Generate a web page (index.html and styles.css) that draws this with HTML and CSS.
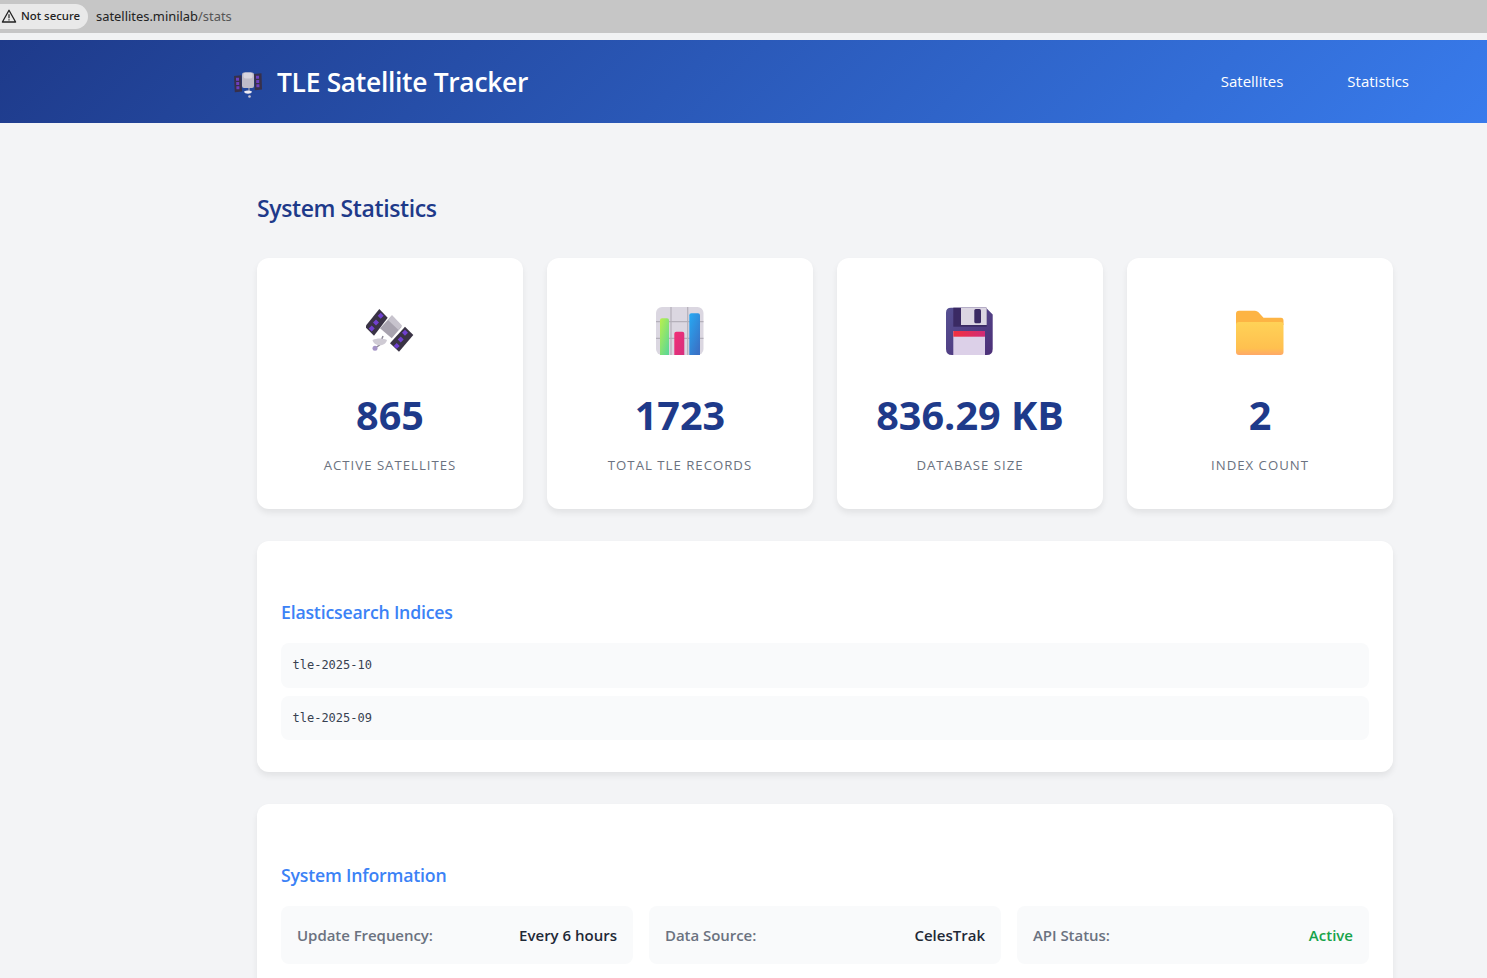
FILE: index.html
```html
<!DOCTYPE html>
<html lang="en">
<head>
<meta charset="utf-8">
<title>System Statistics</title>
<link rel="stylesheet" href="styles.css">
</head>
<body>
<div class="chrome">
  <div class="security">
    <svg class="warn" viewBox="0 0 16 16" width="16" height="16"><path d="M8 2.200 14.600 14H1.400Z" fill="none" stroke="#222" stroke-width="1.300" stroke-linejoin="round"/><path d="M8 6.300v4M8 11.300v1.200" stroke="#222" stroke-width="1.200"/></svg>
    <span>Not secure</span>
  </div>
  <div class="url">satellites.minilab<span class="url-path">/stats</span></div>
</div>
<div class="chrome-gap"></div>
<div class="page">
  <header class="site-header">
    <div class="header-inner">
      <div class="brand">
        <svg class="brand-icon" viewBox="0 0 32 32" width="32" height="32">
          <path d="M1 10 8.500 9.300 9 25.500 1.800 26.200z" fill="#37304a"/>
          <path d="M21 8 28.500 7.300 29 23.500 21.800 24.200z" fill="#37304a"/>
          <path d="M3 11.700h3v3H3zM3.200 16h3v3h-3zM3.400 20.300h3v3h-3zM23 9.700h3v3h-3zM23.200 14h3v3h-3zM23.400 18.300h3v3h-3z" fill="#6d3fc0"/>
          <rect x="9" y="6.500" width="12" height="15.500" rx="2" fill="#bfbbc8"/>
          <rect x="10.500" y="6.500" width="9" height="6" rx="2" fill="#d8d4de"/>
          <path d="M16 22v3" stroke="#a9a5b2" stroke-width="1.200"/>
          <path d="M11 25.500c2.500-1.300 5.500-1.300 8 0-.5 3-7.500 3-8 0z" fill="#eeeaf2"/>
          <circle cx="16.500" cy="30.500" r="1.300" fill="#c9c4d2"/>
        </svg>
        <span class="brand-title">TLE Satellite Tracker</span>
      </div>
      <nav class="nav">
        <a class="nav-link">Satellites</a>
        <a class="nav-link">Statistics</a>
      </nav>
    </div>
  </header>
  <main class="content">
    <h1 class="page-title">System Statistics</h1>
    <section class="stats">
      <article class="stat-card">
        <svg class="stat-icon" viewBox="1 0 48 48" width="48" height="48">
          <path d="M14.300 2 22.700 10.700 9 28.700 0 19.700z" fill="#3a3345"/>
          <path d="M40 19.700 48.300 28 34 44.700 25 36.300z" fill="#3a3345"/>
          <path d="M15.700 5.800 18.700 8.800 15.700 11.700 12.700 8.800zM11 12.500l3 3-3 2.900-3-2.900zM6.700 18.600l3 3-3 2.900-3-2.900zM40 22.800l3 3-3 2.900-3-2.900zM35.700 29.500l3 3-3 2.900-3-2.900zM31.700 35.900l3 3-3 2.900-3-2.900z" fill="#7040d0"/>
          <path d="M26.700 8.700 36.700 19.700 26.700 31.300 15 21.300z" fill="#a8a3af"/>
          <path d="M27 8 37 18.500 33.500 23 23 13z" fill="#c7c3cd"/>
          <path d="M18 29 14.500 38 11 40.500" fill="none" stroke="#8f8a98" stroke-width="1.500"/>
          <path d="M7.500 33c4.500-2 10-2 14.500 0-1.500 7-13 7-14.500 0z" fill="#cfcbd4"/>
          <circle cx="10" cy="41.300" r="2.500" fill="#a594c6"/>
        </svg>
        <div class="stat-value">865</div>
        <div class="stat-label">Active Satellites</div>
      </article>
      <article class="stat-card">
        <svg class="stat-icon" viewBox="0 0 48 48" width="48" height="48">
          <defs>
            <linearGradient id="g1" x1="0" y1="0" x2="0.800" y2="1"><stop offset="0" stop-color="#baf04c"/><stop offset="1" stop-color="#5fd893"/></linearGradient>
            <linearGradient id="g2" x1="0" y1="0" x2="1" y2="1"><stop offset="0" stop-color="#f12e76"/><stop offset="1" stop-color="#d6307e"/></linearGradient>
            <linearGradient id="g3" x1="0" y1="0" x2="0.700" y2="1"><stop offset="0" stop-color="#26aaf4"/><stop offset="1" stop-color="#3a72c6"/></linearGradient>
          </defs>
          <rect x="0" y="0" width="47.500" height="48" rx="6" fill="#dbd7e1"/>
          <path d="M15 0v48M31.700 0v48M0 14.700h47.500M0 31.300h47.500" stroke="#b4b0ba" stroke-width="1.200"/>
          <path d="M4 48V13.300q0-2 2-2h5q2 0 2 2V48z" fill="url(#g1)"/>
          <path d="M18.300 48V26.700q0-2 2-2h6q2 0 2 2V48z" fill="url(#g2)"/>
          <path d="M33.300 48V8.300q0-2 2-2h6.700q2 0 2 2V48z" fill="url(#g3)"/>
        </svg>
        <div class="stat-value">1723</div>
        <div class="stat-label">Total TLE Records</div>
      </article>
      <article class="stat-card">
        <svg class="stat-icon" viewBox="0 0 48 48" width="48" height="48">
          <defs>
            <linearGradient id="d1" x1="0" y1="0" x2="1" y2="1"><stop offset="0" stop-color="#565192"/><stop offset="1" stop-color="#4c2f78"/></linearGradient>
            <linearGradient id="d2" x1="0" y1="0" x2="1" y2="0"><stop offset="0" stop-color="#f3303e"/><stop offset="1" stop-color="#d02c78"/></linearGradient>
          </defs>
          <path d="M5 .7h35l6.700 6.700V42q0 6-6 6H6q-6 0-6-6V5.700q0-5 5-5z" fill="url(#d1)"/>
          <rect x="7.300" y=".7" width="33.400" height="19" fill="#3a2a63"/>
          <rect x="15" y=".7" width="25.700" height="17.300" fill="#dbd5e2"/>
          <rect x="28.300" y="2" width="6.700" height="14.300" rx="1.500" fill="#3a2a63"/>
          <rect x="7.300" y="24" width="31.700" height="24" fill="#dcd0e8"/>
          <rect x="7.300" y="24" width="31.700" height="5.700" fill="url(#d2)"/>
        </svg>
        <div class="stat-value">836.29 KB</div>
        <div class="stat-label">Database Size</div>
      </article>
      <article class="stat-card">
        <svg class="stat-icon" viewBox="0 0 48 48" width="48" height="48">
          <defs>
            <linearGradient id="f1" x1="0" y1="0" x2="0" y2="1"><stop offset="0" stop-color="#ffd257"/><stop offset=".8" stop-color="#ffc04f"/><stop offset="1" stop-color="#ffa868"/></linearGradient>
          </defs>
          <path d="M3 3.700h16q2 0 3.500 1.500l5 5.500H45q2.500 0 2.500 3V18H0V6.700q0-3 3-3z" fill="#fdb444"/>
          <path d="M3 15h42q2.500 0 2.500 3v27q0 3-3 3H3q-3 0-3-3V18q0-3 3-3z" fill="url(#f1)"/>
        </svg>
        <div class="stat-value">2</div>
        <div class="stat-label">Index Count</div>
      </article>
    </section>
    <section class="panel">
      <h2 class="panel-title">Elasticsearch Indices</h2>
      <ul class="index-list">
        <li class="index-item">tle-2025-10</li>
        <li class="index-item">tle-2025-09</li>
      </ul>
    </section>
    <section class="panel">
      <h2 class="panel-title">System Information</h2>
      <div class="info-grid">
        <div class="info-item"><span class="info-label">Update Frequency:</span><span class="info-value">Every 6 hours</span></div>
        <div class="info-item"><span class="info-label">Data Source:</span><span class="info-value">CelesTrak</span></div>
        <div class="info-item"><span class="info-label">API Status:</span><span class="info-value active">Active</span></div>
      </div>
    </section>
  </main>
</div>
</body>
</html>
```
FILE: styles.css
```css
html, body { margin: 0; padding: 0; height: 978px; overflow: hidden; }
body { background: #f3f4f6; font-family: "Open Sans", "Noto Sans", sans-serif; color: #1f2937; }
.chrome { height: 33px; background: #c6c6c6; display: flex; align-items: center; font-family: "Noto Sans", sans-serif; }
.security { display: flex; align-items: center; gap: 4px; height: 25px; width: 88px; box-sizing: border-box; background: #e9e9e9; border-radius: 0 13px 13px 0; padding: 0 0 2px 1px; font-size: 11.400px; font-weight: 500; color: #222; }
.url { margin-left: 8px; padding-bottom: 2px; font-size: 12.900px; color: #222; }
.url-path { color: #555; }
.chrome-gap { height: 7px; background: #f1f2f3; }
.page { width: 1650px; }
.site-header { height: 83px; background: linear-gradient(135deg, #1e3a8a 0%, #3b82f6 100%); display: flex; justify-content: center; }
.header-inner { width: 1184px; display: flex; justify-content: space-between; align-items: center; }
.brand { display: flex; align-items: center; gap: 12px; color: #fff; }
.brand-title { font-size: 26.400px; font-weight: 600; letter-spacing: -0.3px; }
.nav { display: flex; gap: 64px; padding: 0 8px 2px 0; }
.nav-link { color: #fff; font-size: 15px; }
.content { width: 1136px; margin: 0 auto; padding-top: 66px; }
.page-title { margin: 0 0 31px; font-size: 23px; line-height: 38px; font-weight: 600; letter-spacing: -0.4px; color: #1e3a8a; }
.stats { display: grid; grid-template-columns: repeat(4, 266px); gap: 24px; margin: 0 0 32px; }
.stat-card { height: 251px; background: #fff; border-radius: 12px; box-shadow: 0 4px 6px rgba(0,0,0,.07); display: flex; flex-direction: column; align-items: center; padding-top: 49px; box-sizing: border-box; }
.stat-icon { display: block; }
.stat-value { margin-top: 32px; font-size: 39.600px; line-height: 56px; font-weight: 700; color: #1e3a8a; }
.stat-label { margin-top: 12px; font-size: 13.200px; line-height: 20px; letter-spacing: 1px; text-transform: uppercase; color: #6b7280; }
.panel { background: #fff; border-radius: 12px; box-shadow: 0 4px 6px rgba(0,0,0,.07); padding: 56px 24px 32px; margin-bottom: 32px; }
.panel-title { margin: 0 0 16px; font-size: 17.700px; line-height: 30px; font-weight: 600; letter-spacing: -0.2px; color: #3b82f6; }
.index-list { list-style: none; margin: 0; padding: 0; display: flex; flex-direction: column; gap: 8px; }
.index-item { background: #f9fafb; border-radius: 8px; padding: 12px 11.500px; height: 44.500px; box-sizing: border-box; font-family: "DejaVu Sans Mono", monospace; font-size: 12px; line-height: 20px; color: #374151; }
.info-grid { display: grid; grid-template-columns: repeat(3, 1fr); gap: 16px; }
.info-item { height: 58px; box-sizing: border-box; padding: 0 16px; background: #f9fafb; border-radius: 8px; display: flex; justify-content: space-between; align-items: center; font-size: 15px; }
.info-label { font-weight: 600; color: #6b7280; letter-spacing: -0.05px; }
.info-value { font-weight: 600; color: #1f2937; }
.active { color: #16a34a; }
```
